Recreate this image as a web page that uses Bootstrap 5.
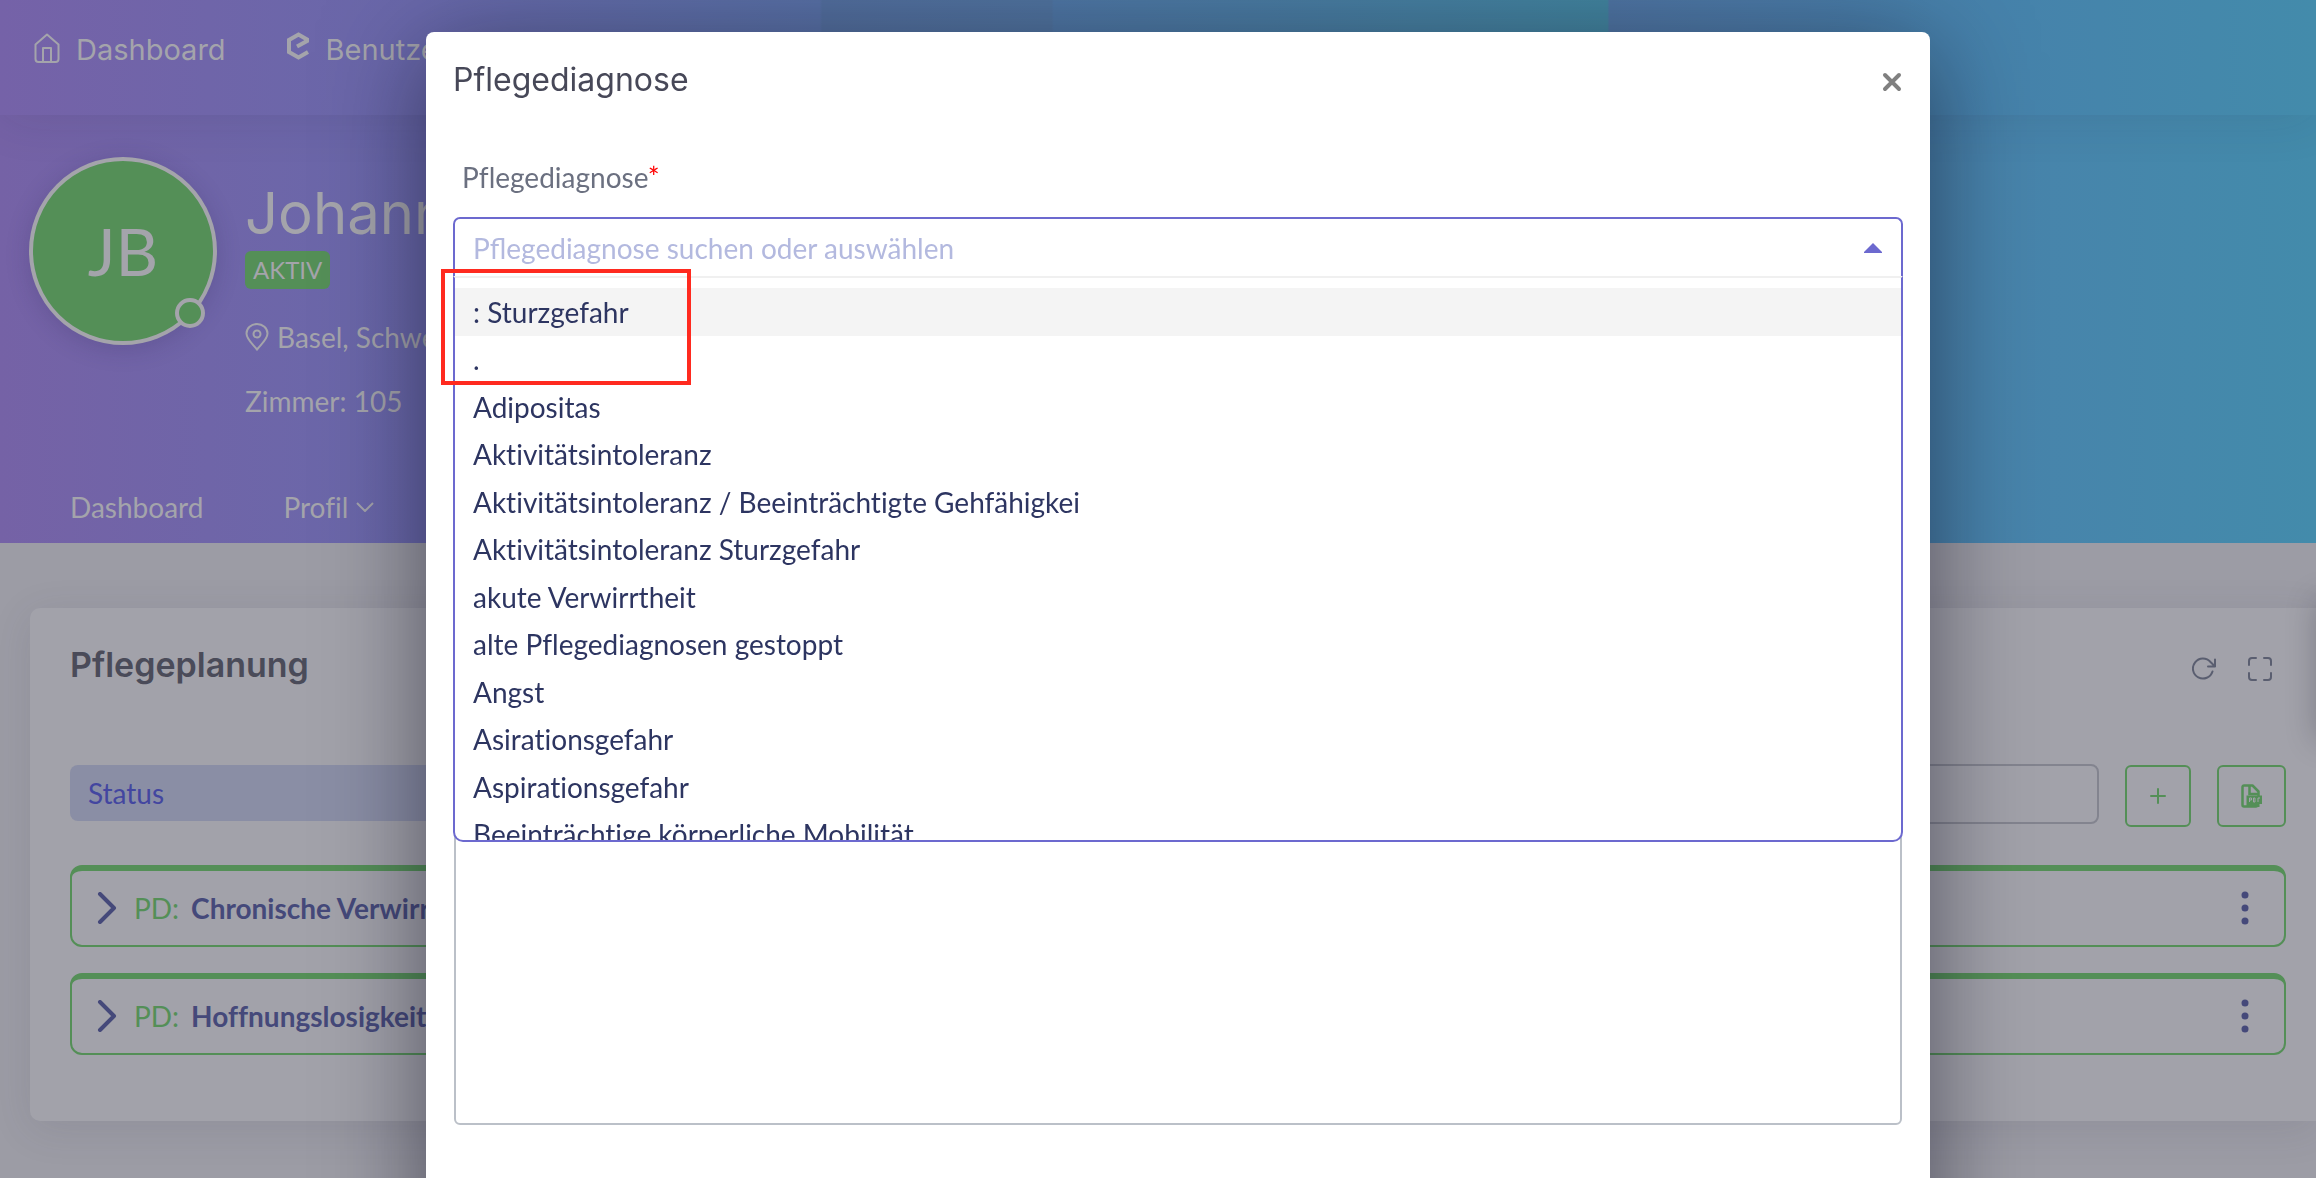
<!DOCTYPE html>
<html lang="de">
<head>
<meta charset="utf-8">
<meta name="viewport" content="width=device-width, initial-scale=1">
<title>Pflegediagnose</title>
<link rel="stylesheet" href="https://cdn.jsdelivr.net/npm/bootstrap@5.3.0/dist/css/bootstrap.min.css">
<style>
  :root { --ink: #a4a4ab; --green: #548f57; --violet: #6c69cf; --navy: #2d3561; }
  body { font-family: Lato, "Open Sans", sans-serif; font-size: 28px; line-height: 40px; font-variant-ligatures: none; background: #9c9ca5; color: var(--ink); min-height: 100vh; }
  a { color: inherit; text-decoration: none; }
  svg { display: block; flex: none; }
  .geo { font-family: Inter, Lato, sans-serif; }

  .topbar { height: 115px; padding: 0 34px 16px; gap: 60px; position: relative; box-shadow: 0 4px 50px rgba(30,30,60,.1);
    background: linear-gradient(90deg, #7562a8 0, #6968aa 18%, #5871a6 35.4%, #536f9e 35.5%, #50749f 45.4%, #4f77a5 45.5%, #42859f 69.4%, #4f75a3 69.5%, #4682ab 86%, #438bab 100%); }
  .topbar a { font-size: 29px; }
  .hero { height: 428px; background: linear-gradient(90deg, #7562a6 0, #6968aa 18%, #4a80ab 80%, #438bab 100%); }
  .avatar { width: 188px; height: 188px; margin: 42px 0 0 5px; border: 4px solid var(--ink); background: var(--green); font-size: 66px; position: relative; box-shadow: 0 4px 24px rgba(40,30,80,.2); }
  .online { position: absolute; right: 8px; bottom: 13px; width: 30px; height: 30px; border: 4px solid var(--ink); background: var(--green); }
  .person { font-size: 58px; line-height: 70px; }
  .who { padding-top: 63px; }
  .state { background: var(--green); font-size: 24px; line-height: 38px; border-radius: 6px; padding: 0 8px; }
  .tabs { padding-left: 70px; gap: 80px; }

  .panel { margin: 65px 0 0 30px; padding: 33px 30px 66px 40px; background: #a2a2aa; border-radius: 10px 0 0 10px; box-shadow: 0 8px 40px rgba(60,60,80,.12); }
  .panel h2 { font-size: 34px; line-height: 48px; color: #4a4b59; }
  .tool { color: #5a5e70; }
  .tools { padding: 8px 10px 0 0; }
  .filter { height: 56px; width: 700px; border: 0; border-radius: 8px; background-color: #8a8ea5; color: #4346a0; padding: 0 18px; appearance: none; }
  .finder { gap: 26px; }
  .lookup { height: 60px; border: 2px solid #83848f; border-radius: 8px; background: transparent; }
  .act { height: 62px; border: 2px solid var(--green); border-radius: 6px; color: var(--green); background: transparent; }
  .act-plus { width: 66px; } .act-pdf { width: 69px; }
  .plans { margin-top: 38px; gap: 26px; }
  .plan { height: 82px; border: 2px solid var(--green); border-top-width: 6px; border-radius: 12px; padding: 0 35px 0 24px; color: #45497a; }
  .plan .kind { color: var(--green); margin-right: 12px; }
  .edge { position: fixed; right: -40px; top: 600px; width: 40px; height: 140px; box-shadow: 0 0 30px rgba(20,20,30,.25); }

  .modal { --bs-modal-border-width: 0; }
  .modal-dialog { margin: 32px 386px 0 426px; max-width: none; width: auto; }
  .modal-content { min-height: 1300px; border: 0; border-radius: 8px; box-shadow: 0 20px 100px rgba(8,8,24,.52); }
  .modal-header { border: 0; padding: 20px 28px 0 27px; height: 86px; align-items: flex-start; }
  .modal-title { font-size: 32px; line-height: 56px; color: #474858; }
  .shut { border: 0; background: none; padding: 20px 0 0; color: #808080; }
  .modal-body { padding: 39px 27px; }
  .field { color: #6b7080; padding-left: 9px; margin-bottom: 20px; }
  .field span { color: #f00; }
  .combo { position: relative; border: 2px solid var(--violet); border-bottom: 0; border-radius: 7px 7px 0 0; height: 59px; }
  .combo input { width: 100%; height: 57px; border: 0; outline: 0; background: transparent; padding: 0 18px; color: var(--navy); }
  .combo input::placeholder { color: #b3b9df; opacity: 1; }
  .combo .caret { position: absolute; right: 19px; top: 24px; }
  .choices { position: absolute; z-index: 2; left: -2px; right: -2px; top: 57px; height: 566px; overflow: hidden; margin: 0; padding: 10px 0 0; list-style: none; background: #fff; border: 2px solid var(--violet); border-top: 2px solid #f0f0f0; border-radius: 0 0 10px 10px; color: var(--navy); }
  .choices li { line-height: 48px; padding: 0 18px; }
  .choices li:nth-child(even) { line-height: 47px; }
  .choices .on { background: #f4f4f4; }
  .notes { display: block; width: calc(100% - 2px); margin: 24px 1px 0; height: 825px; resize: none; border: 2px solid #bbc0c8; border-radius: 6px; outline: 0; }
  .marker { position: absolute; z-index: 3; left: -14px; top: 50px; width: 250px; height: 116px; border: 4px solid #ff2a1f; pointer-events: none; }
</style>
<script src="https://cdn.jsdelivr.net/npm/bootstrap@5.3.0/dist/js/bootstrap.bundle.min.js"></script>
</head>
<body class="overflow-hidden">

<nav class="topbar d-flex align-items-center geo">
  <a href="#" class="d-flex align-items-center gap-3">
    <svg width="26" height="34" viewBox="0 0 26 34" fill="none" stroke="currentColor" stroke-width="2" stroke-linejoin="round"><path d="M1.500 11.500 13 1.500l11.500 10V26a3 3 0 0 1-3 3h-17a3 3 0 0 1-3-3zM9 29V15h8v14"/></svg>
    <span>Dashboard</span>
  </a>
  <a href="#" class="d-flex align-items-center gap-3">
    <svg width="24" height="36" viewBox="0 0 24 36" fill="none" stroke="currentColor" stroke-width="4"><path d="M11 14.500 21 9V7.500L12.500 2.500 3 8v12l9.500 5.500L22 20"/></svg>
    <span>Benutzer</span>
  </a>
</nav>

<header class="hero d-flex flex-column">
  <div class="d-flex px-4 flex-grow-1">
    <div class="avatar rounded-circle d-flex align-items-center justify-content-center">
      <span>JB</span><span class="online rounded-circle"></span>
    </div>
    <div class="who ms-4 ps-1">
      <h1 class="person geo fw-normal m-0">Johann</h1>
      <span class="state d-inline-block">AKTIV</span>
      <div class="d-flex align-items-center mt-4 pt-1 gap-2">
        <svg width="24" height="28" viewBox="0 0 24 28" fill="none" stroke="currentColor" stroke-width="2"><path d="M12 26.500C7 20.500 1.500 16 1.500 10.500a10.500 9.500 0 0 1 21 0C22.500 16 17 20.500 12 26.500z"/><circle cx="12" cy="11" r="3.500"/></svg>
        <span>Basel, Schweiz</span>
      </div>
      <div class="mt-4">Zimmer: 105</div>
    </div>
  </div>
  <nav class="tabs d-flex pb-3">
    <a href="#">Dashboard</a>
    <a href="#" class="d-flex align-items-center gap-2">Profil
      <svg width="18" height="10" viewBox="0 0 18 10" fill="none" stroke="currentColor" stroke-width="2"><path d="m1 1 8 8 8-8"/></svg></a>
  </nav>
</header>

<main class="panel">
  <div class="d-flex justify-content-between align-items-center">
    <h2 class="geo fw-semibold m-0">Pflegeplanung</h2>
    <div class="tools d-flex gap-2">
      <button class="btn p-0 border-0 tool me-4" aria-label="Neu laden"><svg width="24" height="24" viewBox="0 0 24 24" fill="none" stroke="currentColor" stroke-width="2" stroke-linecap="round" stroke-linejoin="round"><path d="M20.500 14.500A10 10 0 1 1 18.500 5L23 9.500M23 2.500v7h-7"/></svg></button>
      <button class="btn p-0 border-0 tool me-1" aria-label="Vollbild"><svg width="24" height="24" viewBox="0 0 24 24" fill="none" stroke="currentColor" stroke-width="2" stroke-linecap="round"><path d="M1 8V4a3 3 0 0 1 3-3h4M16 1h4a3 3 0 0 1 3 3v4M23 16v4a3 3 0 0 1-3 3h-4M8 23H4a3 3 0 0 1-3-3v-4"/></svg></button>
    </div>
  </div>
  <div class="d-flex justify-content-between mt-5 pt-4">
    <select class="filter mt-1" aria-label="Status"><option>Status</option></select>
    <div class="finder d-flex flex-grow-1 justify-content-end align-items-center">
      <input class="lookup w-50" type="search" aria-label="Suche">
      <button class="act act-plus mt-1 d-flex align-items-center justify-content-center" aria-label="Neu"><svg width="16" height="16" viewBox="0 0 16 16" stroke="currentColor" stroke-width="2" stroke-linecap="round"><path d="M8 1v14M1 8h14"/></svg></button>
      <button class="act act-pdf mt-1 d-flex align-items-center justify-content-center" aria-label="PDF"><svg width="21" height="24" viewBox="0 0 21 24" fill="none" stroke="currentColor" stroke-width="2.500"><path d="M17 21a2 2 0 0 1-2 1.500H3A1.500 1.500 0 0 1 1.500 21V3A1.500 1.500 0 0 1 3 1.500h8.500l6 6V12" stroke-linejoin="round"/><path d="M8.500 1.500V10h9"/><path d="M5.500 11.500H21V20h-2.500v3H5.500z" fill="currentColor" stroke="none"/><path d="M8.500 18v-4h2v2h-2M12.500 14v4h1.500v-4zM17 18v-4h2" stroke="#a2a2aa" stroke-width="1"/></svg></button>
    </div>
  </div>
  <div class="plans d-flex flex-column">
    <div class="plan d-flex align-items-center">
      <svg width="22" height="32" viewBox="0 0 22 32" fill="none" stroke="currentColor" stroke-width="4" stroke-linecap="round" stroke-linejoin="round"><path d="m4 2 14 14L4 30"/></svg>
      <span class="kind ms-3">PD:</span><strong class="me-auto">Chronische Verwirrtheit</strong>
      <svg width="8" height="34" viewBox="0 0 8 34" fill="currentColor"><circle cx="4" cy="4" r="3.500"/><circle cx="4" cy="17" r="3.500"/><circle cx="4" cy="30" r="3.500"/></svg>
    </div>
    <div class="plan d-flex align-items-center">
      <svg width="22" height="32" viewBox="0 0 22 32" fill="none" stroke="currentColor" stroke-width="4" stroke-linecap="round" stroke-linejoin="round"><path d="m4 2 14 14L4 30"/></svg>
      <span class="kind ms-3">PD:</span><strong class="me-auto">Hoffnungslosigkeit</strong>
      <svg width="8" height="34" viewBox="0 0 8 34" fill="currentColor"><circle cx="4" cy="4" r="3.500"/><circle cx="4" cy="17" r="3.500"/><circle cx="4" cy="30" r="3.500"/></svg>
    </div>
  </div>
</main>
<div class="edge"></div>

<div class="modal show d-block overflow-hidden" tabindex="-1" role="dialog" aria-labelledby="dlgTitle">
  <div class="modal-dialog">
    <div class="modal-content">
      <div class="modal-header">
        <h5 class="modal-title geo fw-normal" id="dlgTitle">Pflegediagnose</h5>
        <button class="shut" aria-label="Schließen"><svg width="20" height="20" viewBox="0 0 20 20" stroke="currentColor" stroke-width="4" stroke-linecap="round"><path d="m3 3 14 14M17 3 3 17"/></svg></button>
      </div>
      <div class="modal-body">
        <label class="field d-block" for="diag">Pflegediagnose<span>*</span></label>
        <div class="combo">
          <input id="diag" type="text" role="combobox" aria-expanded="true" aria-controls="diagList" placeholder="Pflegediagnose suchen oder auswählen">
          <svg class="caret" width="18" height="10" viewBox="0 0 18 10" fill="#6c69cf"><path d="M9 0l9 9v1H0V9z"/></svg>
          <ul class="choices" id="diagList" role="listbox">
            <li class="on" role="option">: Sturzgefahr</li>
            <li role="option">.</li>
            <li role="option">Adipositas</li>
            <li role="option">Aktivitätsintoleranz</li>
            <li role="option">Aktivitätsintoleranz / Beeinträchtigte Gehfähigkei</li>
            <li role="option">Aktivitätsintoleranz Sturzgefahr</li>
            <li role="option">akute Verwirrtheit</li>
            <li role="option">alte Pflegediagnosen gestoppt</li>
            <li role="option">Angst</li>
            <li role="option">Asirationsgefahr</li>
            <li role="option">Aspirationsgefahr</li>
            <li role="option">Beeinträchtige körperliche Mobilität</li>
          </ul>
          <div class="marker"></div>
        </div>
        <textarea class="notes" aria-label="Beschreibung"></textarea>
      </div>
    </div>
  </div>
</div>
</body>
</html>
